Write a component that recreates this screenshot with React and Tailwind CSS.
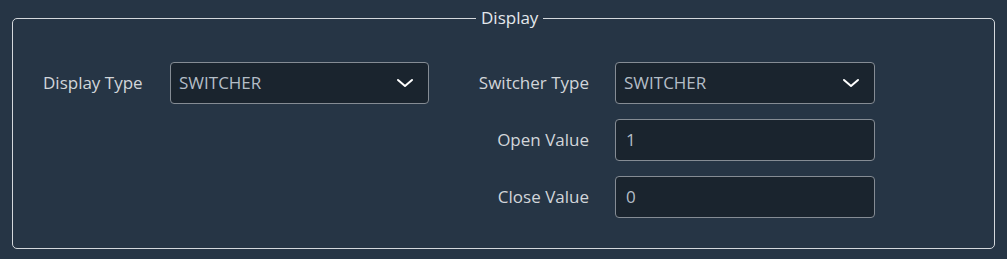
import React from "react";

function Chevron() {
  return (
    <svg width="18" height="10" viewBox="0 0 18 10" fill="none" className="shrink-0">
      <path d="M2 2 L9 8 L16 2" stroke="#ffffff" strokeWidth="2" strokeLinecap="round" strokeLinejoin="round" />
    </svg>
  );
}

function Select({ value, w }) {
  return (
    <div className={`flex h-[42px] ${w} items-center justify-between rounded-[4px] border border-[#858c94] bg-[#1a242e] pl-[8px] pr-[14px]`}>
      <span className="text-[#b4bdc7]">{value}</span>
      <Chevron />
    </div>
  );
}

function Input({ value }) {
  return (
    <div className="flex h-[42px] w-[260px] items-center rounded-[4px] border border-[#858c94] bg-[#1a242e] pl-[10px]">
      <span className="text-[#b4bdc7]">{value}</span>
    </div>
  );
}

export default function App() {
  return (
    <div
      className="h-[259px] w-full bg-[#263545] px-[12px] pt-[8px] text-[17px]"
      style={{ fontFamily: '"Open Sans", "Noto Sans", sans-serif' }}
    >
      <fieldset className="h-[241px] rounded-[5px] border border-[#d4d8dc]">
        <legend className="ml-[463px] px-[5px] text-[17px] leading-[20px] text-[#e4e8ec]">Display</legend>
        <div className="mt-[34px] flex pl-[30px]">
          <div className="flex items-center self-start">
            <span className="w-[127px] whitespace-nowrap text-[#d2d6da]">Display Type</span>
            <Select value="SWITCHER" w="w-[259px]" />
          </div>
          <div className="ml-[40px] grid grid-cols-[120px_260px] items-center gap-x-[26px] gap-y-[15px]">
            <span className="whitespace-nowrap text-right text-[#d2d6da]">Switcher Type</span>
            <Select value="SWITCHER" w="w-[260px]" />
            <span className="whitespace-nowrap text-right text-[#d2d6da]">Open Value</span>
            <Input value="1" />
            <span className="whitespace-nowrap text-right text-[#d2d6da]">Close Value</span>
            <Input value="0" />
          </div>
        </div>
      </fieldset>
    </div>
  );
}
